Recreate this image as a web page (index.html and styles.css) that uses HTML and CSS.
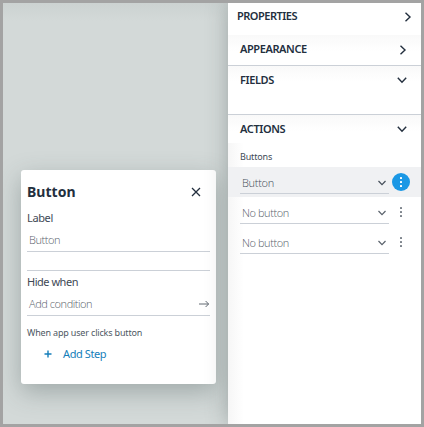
FILE: index.html
```html
<!DOCTYPE html>
<html lang="en">
<head>
<meta charset="utf-8">
<title>Button properties</title>
<link rel="stylesheet" href="styles.css">
</head>
<body>
<main class="frame">
  <section class="canvas">
    <div class="card">
      <header class="card-head">
        <h1>Button</h1>
        <svg class="close" width="10" height="10" viewBox="0 0 10 10"><path d="M1 1l8 8M9 1L1 9"/></svg>
      </header>
      <div class="label"><span>Label</span></div>
      <div class="input"><span>Button</span></div>
      <div class="divider"></div>
      <div class="label hide-label"><span>Hide when</span></div>
      <div class="input"><span>Add condition</span>
        <svg class="arrow" width="11" height="8" viewBox="0 0 11 8"><path d="M0 4h9.6M6.6 1l3 3-3 3"/></svg>
      </div>
      <div class="caption"><span>When app user clicks button</span></div>
      <div class="add">
        <svg width="8" height="8" viewBox="0 0 8 8"><path d="M4 .5v7M.5 4h7"/></svg>
        <span>Add Step</span>
      </div>
    </div>
  </section>
  <aside class="panel">
    <div class="section properties"><span>PROPERTIES</span><svg class="chev" width="8" height="10" viewBox="0 0 8 10"><path d="M1.5 .8L6 5 1.5 9.2"/></svg></div>
    <div class="section appearance"><span>APPEARANCE</span><svg class="chev" width="8" height="10" viewBox="0 0 8 10"><path d="M1.5 .8L6 5 1.5 9.2"/></svg></div>
    <div class="section fields"><span>FIELDS</span><svg class="chev" width="10" height="8" viewBox="0 0 10 8"><path d="M.8 1.7L5 6.2l4.2-4.5"/></svg></div>
    <div class="section actions"><span>ACTIONS</span><svg class="chev" width="10" height="8" viewBox="0 0 10 8"><path d="M.8 1.7L5 6.2l4.2-4.5"/></svg></div>
    <div class="group"><span>Buttons</span></div>
    <div class="row active">
      <div class="select"><span>Button</span><svg width="8" height="6" viewBox="0 0 8 6"><path d="M.5 1L4 4.7 7.5 1"/></svg></div>
      <div class="more"><i></i><i></i><i></i></div>
    </div>
    <div class="row">
      <div class="select"><span>No button</span><svg width="8" height="6" viewBox="0 0 8 6"><path d="M.5 1L4 4.7 7.5 1"/></svg></div>
      <div class="more"><i></i><i></i><i></i></div>
    </div>
    <div class="row">
      <div class="select"><span>No button</span><svg width="8" height="6" viewBox="0 0 8 6"><path d="M.5 1L4 4.7 7.5 1"/></svg></div>
      <div class="more"><i></i><i></i><i></i></div>
    </div>
  </aside>
</main>
</body>
</html>
```

FILE: styles.css
```css
* { box-sizing: border-box; }
body { margin: 0; font-family: "Noto Sans", "Open Sans", sans-serif; color: #232f3e; }
svg { display: block; fill: none; stroke: currentColor; flex: none; }
span { white-space: nowrap; }
.frame { width: 424px; height: 427px; border: 3px solid #a3a3a3; display: flex; overflow: hidden; background: #d3d9d8; }
.canvas { width: 225px; padding: 167px 0 0 18px; background: linear-gradient(180deg, rgba(190,198,197,.35), transparent 18px), #d3d9d8; }
.card { width: 195px; height: 214px; padding: 0 6px; background: #fff; border-radius: 3px; box-shadow: 0 8px 24px rgba(60,75,75,.34); }
.card-head { height: 39px; padding: 5px 9px 0 0; display: flex; align-items: center; justify-content: space-between; }
h1 { margin: 0; font-size: 14px; line-height: 18px; font-weight: 700; letter-spacing: .02px; }
.close { stroke-width: 1.3; margin-top: -1px; }
.label { height: 18px; padding-bottom: 2px; display: flex; align-items: center; font-size: 11px; letter-spacing: -.38px; color: #3e4854; }
.input { height: 25px; padding: 1px 0 0 2px; display: flex; align-items: center; justify-content: space-between; border-bottom: 1px solid #cbd0d7; font-family: "Open Sans", sans-serif; font-weight: 300; font-size: 11px; letter-spacing: -.44px; color: #59616b; }
.divider { height: 19px; border-bottom: 1px solid #cbd0d7; }
.hide-label { height: 20px; padding: 1px 0 0; }
.hide-label span { letter-spacing: -.48px; }
.arrow { color: #626a73; margin-top: 1px; }
.caption { height: 34px; padding-bottom: 1px; display: flex; align-items: center; font-size: 9px; letter-spacing: -.17px; color: #4e5863; }
.add { height: 9px; margin-top: -1px; padding-left: 17px; display: flex; align-items: center; gap: 11px; font-size: 11px; letter-spacing: -.4px; color: #147eba; }
.add svg { stroke-width: 1.4; }
.panel { width: 193px; background: linear-gradient(90deg, #f6f6f6, #fff 16px); box-shadow: 0 0 20px rgba(50,65,65,.34); position: relative; }
.section { display: flex; justify-content: space-between; font-size: 11px; line-height: 14px; font-weight: 600; letter-spacing: -.4px; padding: 7px 14px 0 12px; border-top: 1px solid #cbd0d7; background: linear-gradient(#f9f9f9, #fff 16px); }
.section .chev { stroke-width: 1.4; margin-top: 3px; }
.properties { height: 32px; border: 0; background: #fff; padding: 6px 9px 0 9px; letter-spacing: -.5px; }
.appearance { height: 30px; border: 0; padding-top: 7px; }
.fields { height: 49px; }
.actions { height: 29px; }
.group { height: 24px; padding: 2px 0 0 12px; display: flex; align-items: center; font-size: 9px; letter-spacing: -.15px; color: #414b57; }
.row { height: 30px; padding-left: 12px; display: flex; }
.row.active { background: #f0f1f3; }
.select { width: 149px; height: 27px; padding: 5px 3px 0 2px; display: flex; align-items: center; justify-content: space-between; border-bottom: 1px solid #cbd0d7; font-family: "Open Sans", sans-serif; font-weight: 300; font-size: 11px; letter-spacing: -.42px; color: #59616b; }
.select svg { stroke-width: 1.2; }
.more { width: 18px; height: 18px; margin: 6px 0 0 3px; border-radius: 50%; display: flex; flex-direction: column; align-items: center; justify-content: center; gap: 2px; color: #7b828a; }
.more i { width: 2px; height: 2px; background: currentColor; border-radius: .5px; }
.active .more { background: #1b98e5; color: #fff; }
.active .select { color: #444d58; letter-spacing: -.3px; }
```
